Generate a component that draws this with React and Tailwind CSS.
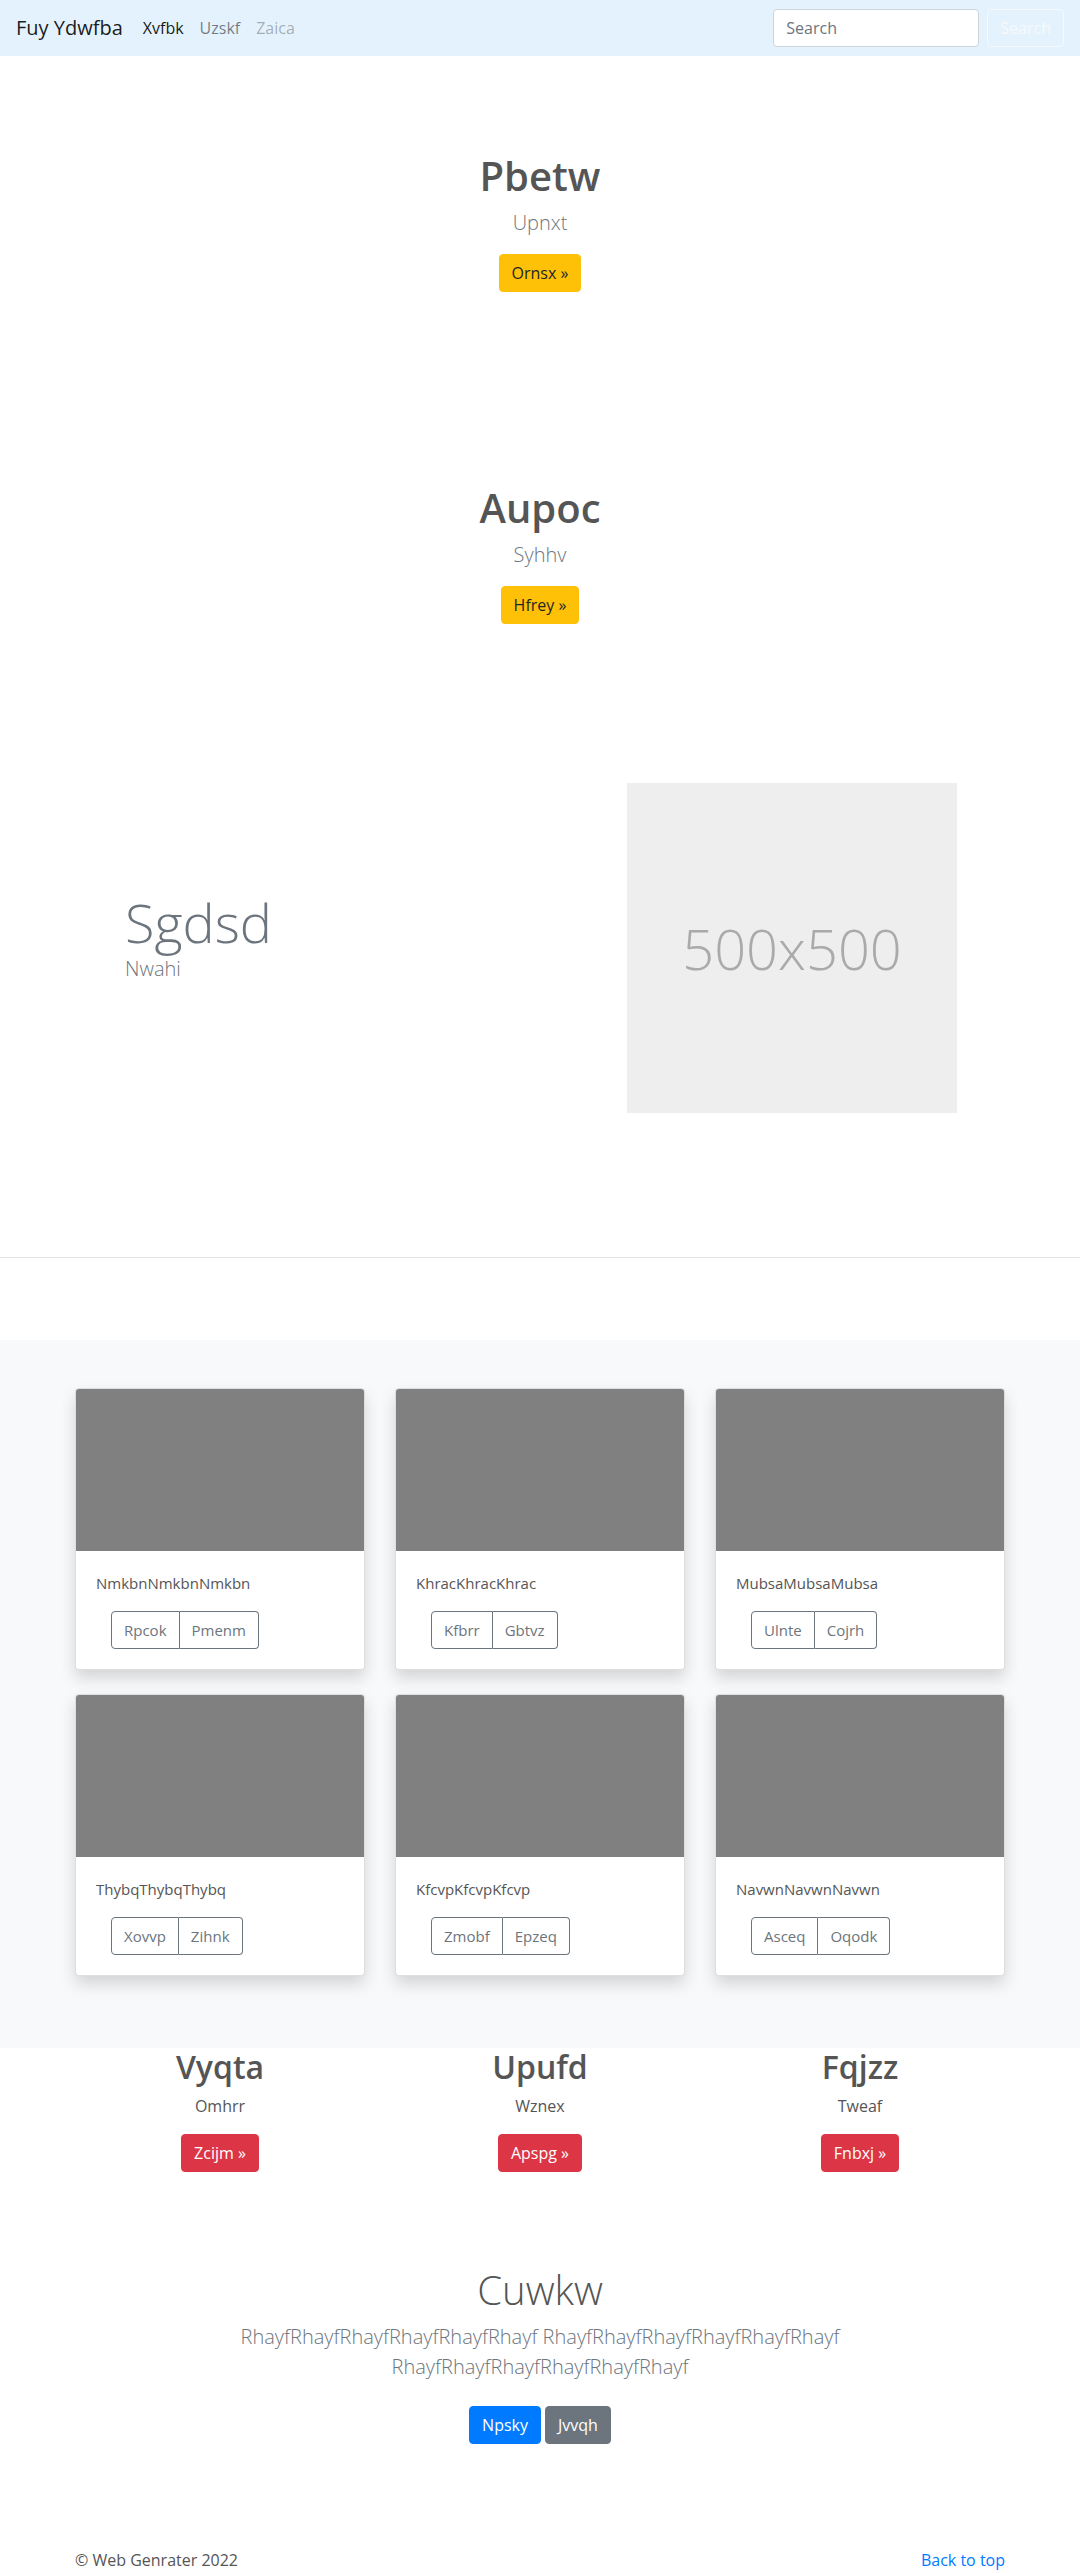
const cards = [
  { title: "NmkbnNmkbnNmkbn", a: "Rpcok", b: "Pmenm" },
  { title: "KhracKhracKhrac", a: "Kfbrr", b: "Gbtvz" },
  { title: "MubsaMubsaMubsa", a: "Ulnte", b: "Cojrh" },
  { title: "ThybqThybqThybq", a: "Xovvp", b: "Zihnk" },
  { title: "KfcvpKfcvpKfcvp", a: "Zmobf", b: "Epzeq" },
  { title: "NavwnNavwnNavwn", a: "Asceq", b: "Oqodk" },
];

const features = [
  { title: "Vyqta", text: "Omhrr", btn: "Zcijm »" },
  { title: "Upufd", text: "Wznex", btn: "Apspg »" },
  { title: "Fqjzz", text: "Tweaf", btn: "Fnbxj »" },
];

function Hero({ title, sub, btn }) {
  return (
    <section className="h-[332px] flex flex-col items-center justify-center text-center">
      <h1 className="text-[40px] font-semibold leading-[1.2] mb-2 text-[#555]">{title}</h1>
      <p className="text-xl font-light leading-[30px] text-[#6c757d] mb-4">{sub}</p>
      <a href="#" className="px-3 py-1.5 text-base leading-6 rounded border border-[#ffc107] bg-[#ffc107] text-[#212529]">
        {btn}
      </a>
    </section>
  );
}

export default function App() {
  return (
    <div className="min-h-screen bg-white font-['Open_Sans','Segoe_UI',sans-serif] text-[#555]">
      <nav className="h-14 bg-[#e3f2fd] flex items-center px-4">
        <a href="#" className="text-xl text-black/90 mr-3">Fuy Ydwfba</a>
        <ul className="flex">
          <li><a href="#" className="px-2 text-black/90">Xvfbk</a></li>
          <li><a href="#" className="px-2 text-black/50">Uzskf</a></li>
          <li><a href="#" className="px-2 text-black/30">Zaica</a></li>
        </ul>
        <form className="ml-auto flex items-center">
          <input
            type="text"
            placeholder="Search"
            className="w-[206px] h-[38px] px-3 mr-2 rounded border border-[#ced4da] bg-white text-base placeholder:text-[#6c757d]"
          />
          <button type="button" className="h-[38px] px-3 rounded border border-[#f8f9fa] text-[#f8f9fa] text-base">
            Search
          </button>
        </form>
      </nav>

      <Hero title="Pbetw" sub="Upnxt" btn="Ornsx »" />
      <Hero title="Aupoc" sub="Syhhv" btn="Hfrey »" />

      <section className="pt-[63px] pb-[144px]">
        <div className="w-[960px] mx-auto flex items-center">
          <div className="flex-1 pl-[65px] pb-[22px]">
            <h2 className="text-[54px] font-light leading-[1.2] text-[#6c757d]">Sgdsd</h2>
            <p className="text-xl font-light leading-[30px] text-[#6c757d]">Nwahi</p>
          </div>
          <div className="w-[330px] h-[330px] mr-[63px] bg-[#eeeeee] flex items-center justify-center">
            <span className="text-[56px] font-light text-[#aaaaaa]">500x500</span>
          </div>
        </div>
      </section>

      <hr className="border-[#e5e5e5]" />

      <section className="mt-[82px] bg-[#f8f9fa] pt-12 pb-[72px]">
        <div className="w-[930px] mx-auto grid grid-cols-3 gap-x-[30px] gap-y-6">
          {cards.map((c) => (
            <div key={c.title} className="bg-white rounded border border-black/[.125] shadow-[0_.5rem_1rem_rgba(0,0,0,.15)] overflow-hidden">
              <div className="h-[162px] bg-[#808080]"></div>
              <div className="p-5">
                <p className="text-[15px] leading-6 mb-4 text-[#555]">{c.title}</p>
                <div className="ml-[15px] inline-flex">
                  <button type="button" className="h-[38px] px-3 text-[15px] text-[#6c757d] border border-[#6c757d] rounded-l">
                    {c.a}
                  </button>
                  <button type="button" className="h-[38px] px-3 text-[15px] text-[#6c757d] border border-l-0 border-[#6c757d] rounded-r">
                    {c.b}
                  </button>
                </div>
              </div>
            </div>
          ))}
        </div>
      </section>

      <div className="w-[960px] mx-auto grid grid-cols-3">
        {features.map((f) => (
          <div key={f.title} className="text-center">
            <h2 className="text-[32px] font-semibold leading-[1.2] mb-2 text-[#555]">{f.title}</h2>
            <p className="text-base leading-6 mb-4 text-[#555]">{f.text}</p>
            <a href="#" className="inline-block px-3 py-1.5 text-base leading-6 rounded border border-[#dc3545] bg-[#dc3545] text-white">
              {f.btn}
            </a>
          </div>
        ))}
      </div>

      <section className="pt-[94px] pb-12 text-center">
        <div className="max-w-[640px] mx-auto">
          <h1 className="text-[40px] font-light leading-[1.2] mb-2 text-[#555]">Cuwkw</h1>
          <p className="text-xl font-light leading-[30px] text-[#6c757d] mb-4">
            RhayfRhayfRhayfRhayfRhayfRhayf RhayfRhayfRhayfRhayfRhayfRhayf RhayfRhayfRhayfRhayfRhayfRhayf
          </p>
          <p>
            <a href="#" className="inline-block my-2 mr-1 px-3 py-1.5 text-base leading-6 rounded border border-[#007bff] bg-[#007bff] text-white">
              Npsky
            </a>
            <a href="#" className="inline-block my-2 px-3 py-1.5 text-base leading-6 rounded border border-[#6c757d] bg-[#6c757d] text-white">
              Jvvqh
            </a>
          </p>
        </div>
      </section>

      <footer className="pt-12 pb-12">
        <div className="w-[930px] mx-auto flex justify-between text-base leading-6">
          <p className="text-[#555]">© Web Genrater 2022</p>
          <a href="#" className="text-[#007bff]">Back to top</a>
        </div>
      </footer>
    </div>
  );
}
